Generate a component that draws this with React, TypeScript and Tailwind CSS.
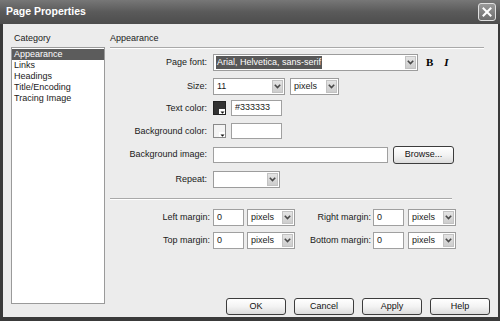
import type { ReactNode } from 'react';

function Chevron() {
  return (
    <svg width="7" height="5" viewBox="0 0 7 5">
      <polyline points="0.8,0.8 3.5,3.6 6.2,0.8" fill="none" stroke="#4a4a4a" strokeWidth="1.6" />
    </svg>
  );
}

function Select({ w, value, highlight }: { w: string; value?: string; highlight?: boolean }) {
  return (
    <div className={`${w} h-[17px] flex items-stretch bg-white border border-[#9c9c9c]`}>
      <div className="flex-1 flex items-center pl-[2px] overflow-hidden whitespace-nowrap">
        {value && (
          <span
            className={
              highlight
                ? 'bg-[#585858] text-white px-[1px] leading-[13px]'
                : 'px-[1px] leading-[13px]'
            }
          >
            {value}
          </span>
        )}
      </div>
      <div className="w-[11px] m-[1px] flex items-center justify-center bg-gradient-to-b from-[#e4e4e4] to-[#cdcdcd] border border-[#c2c2c2]">
        <Chevron />
      </div>
    </div>
  );
}

function Input({ w, h = 'h-[16px]', value }: { w: string; h?: string; value?: string }) {
  return (
    <div className={`${w} ${h} flex items-center bg-white border border-[#a0a0a0] pl-[3px]`}>
      {value}
    </div>
  );
}

function Swatch({ dark }: { dark?: boolean }) {
  return (
    <div
      className={`relative w-[13px] h-[14px] border ${
        dark ? 'bg-[#333333] border-[#222]' : 'bg-[#f4f4f4] border-[#8a8a8a]'
      }`}
    >
      <div className="absolute right-0 bottom-0 w-[6px] h-[5px] bg-white flex items-end justify-end">
        <svg width="5" height="3" viewBox="0 0 5 3">
          <polygon points="0.5,0.5 4.5,0.5 2.5,2.8" fill="#111" />
        </svg>
      </div>
    </div>
  );
}

function Button({ children, w = 'w-[60px]', h = 'h-[17px]' }: { children: ReactNode; w?: string; h?: string }) {
  return (
    <div
      className={`${w} ${h} flex items-center justify-center rounded-[3px] border border-[#3c3c3c] bg-gradient-to-b from-[#ffffff] via-[#f3f3f3] to-[#dcdcdc] text-[#111]`}
    >
      {children}
    </div>
  );
}

function Row({ label, h, children }: { label: string; h: string; children: ReactNode }) {
  return (
    <div className={`${h} flex items-start`}>
      <div className="w-[97px] h-[17px] flex items-center justify-end whitespace-nowrap">{label}</div>
      <div className="ml-[6px] flex items-center gap-[5px]">{children}</div>
    </div>
  );
}

function Etched() {
  return (
    <div>
      <div className="h-px bg-[#a9a9a9]" />
      <div className="h-px bg-white" />
    </div>
  );
}

export default function App() {
  const categories = ['Appearance', 'Links', 'Headings', 'Title/Encoding', 'Tracing Image'];

  return (
    <div
      className="w-[500px] h-[321px] flex flex-col bg-[#3a3a3a] text-[9px] text-[#1a1a1a] overflow-hidden"
      style={{ fontFamily: '"Liberation Sans", Arial, sans-serif' }}
    >
      {/* title bar */}
      <div className="h-[24px] flex items-center justify-between pl-[6px] pr-[4px] bg-gradient-to-b from-[#777777] via-[#5a5a5a] to-[#4d4d4d]">
        <span className="text-white font-bold text-[10.5px]">Page Properties</span>
        <div className="w-[18px] h-[18px] rounded-[3px] border border-[#e0e0e0] bg-gradient-to-b from-[#9a9a9a] to-[#6e6e6e] flex items-center justify-center">
          <svg width="10" height="10" viewBox="0 0 10 10">
            <path d="M1.5 1.5 L8.5 8.5 M8.5 1.5 L1.5 8.5" stroke="#fff" strokeWidth="2" strokeLinecap="square" />
          </svg>
        </div>
      </div>

      {/* body */}
      <div className="flex-1 ml-[3px] mr-[2px] mb-[4px] bg-[#ececec] flex">
        {/* category column */}
        <div className="ml-[8px] w-[94px] pt-[9px] flex flex-col">
          <div className="h-[11px] leading-[11px] pl-[3px]">Category</div>
          <div className="mt-[3px] h-[257px] bg-white border border-[#9a9a9a] pt-[1px]">
            {categories.map((c, i) => (
              <div
                key={c}
                className={`h-[11px] leading-[11px] pl-[2px] ${i === 0 ? 'bg-[#5c5c5c] text-white' : ''}`}
              >
                {c}
              </div>
            ))}
          </div>
        </div>

        {/* settings column */}
        <div className="flex-1 ml-[5px] pt-[9px] pr-[8px] flex flex-col">
          <div className="h-[11px] leading-[11px]">Appearance</div>
          <div className="mt-[3px] mr-[6px]">
            <Etched />
          </div>

          <div className="mt-[5px] flex flex-col">
            <Row label="Page font:" h="h-[24px]">
              <Select w="w-[205px]" value="Arial, Helvetica, sans-serif" highlight />
              <span
                className="ml-[3px] font-bold text-[11px] text-black"
                style={{ fontFamily: '"Liberation Serif", serif' }}
              >
                B
              </span>
              <span
                className="ml-[6px] font-bold italic text-[11px] text-black"
                style={{ fontFamily: '"Liberation Serif", serif' }}
              >
                I
              </span>
            </Row>
            <Row label="Size:" h="h-[22px]">
              <Select w="w-[72px]" value="11" />
              <Select w="w-[49px]" value="pixels" />
            </Row>
            <Row label="Text color:" h="h-[23px]">
              <Swatch dark />
              <Input w="w-[51px]" value="#333333" />
            </Row>
            <Row label="Background color:" h="h-[23px]">
              <Swatch />
              <Input w="w-[51px]" />
            </Row>
            <Row label="Background image:" h="h-[25px]">
              <Input w="w-[175px]" />
              <Button w="w-[61px]" h="h-[18px]">
                Browse...
              </Button>
            </Row>
            <Row label="Repeat:" h="h-[27px]">
              <Select w="w-[67px]" />
            </Row>
          </div>

          <div className="w-[342px]">
            <Etched />
          </div>

          <div className="mt-[9px] flex flex-col">
            {[
              ['Left margin:', 'Right margin:'],
              ['Top margin:', 'Bottom margin:'],
            ].map(([a, b]) => (
              <div key={a} className="h-[23px] flex items-start">
                <div className="w-[100px] h-[17px] flex items-center justify-end whitespace-nowrap">{a}</div>
                <div className="ml-[3px]">
                  <Input w="w-[31px]" h="h-[17px]" value="0" />
                </div>
                <div className="ml-[3px]">
                  <Select w="w-[48px]" value="pixels" />
                </div>
                <div className="w-[76px] h-[17px] flex items-center justify-end whitespace-nowrap">{b}</div>
                <div className="ml-[2px]">
                  <Input w="w-[31px]" h="h-[17px]" value="0" />
                </div>
                <div className="ml-[4px]">
                  <Select w="w-[48px]" value="pixels" />
                </div>
              </div>
            ))}
          </div>

          <div className="mt-auto mb-[2px] flex justify-end gap-[8px]">
            <Button>OK</Button>
            <Button>Cancel</Button>
            <Button>Apply</Button>
            <Button>Help</Button>
          </div>
        </div>
      </div>
    </div>
  );
}
